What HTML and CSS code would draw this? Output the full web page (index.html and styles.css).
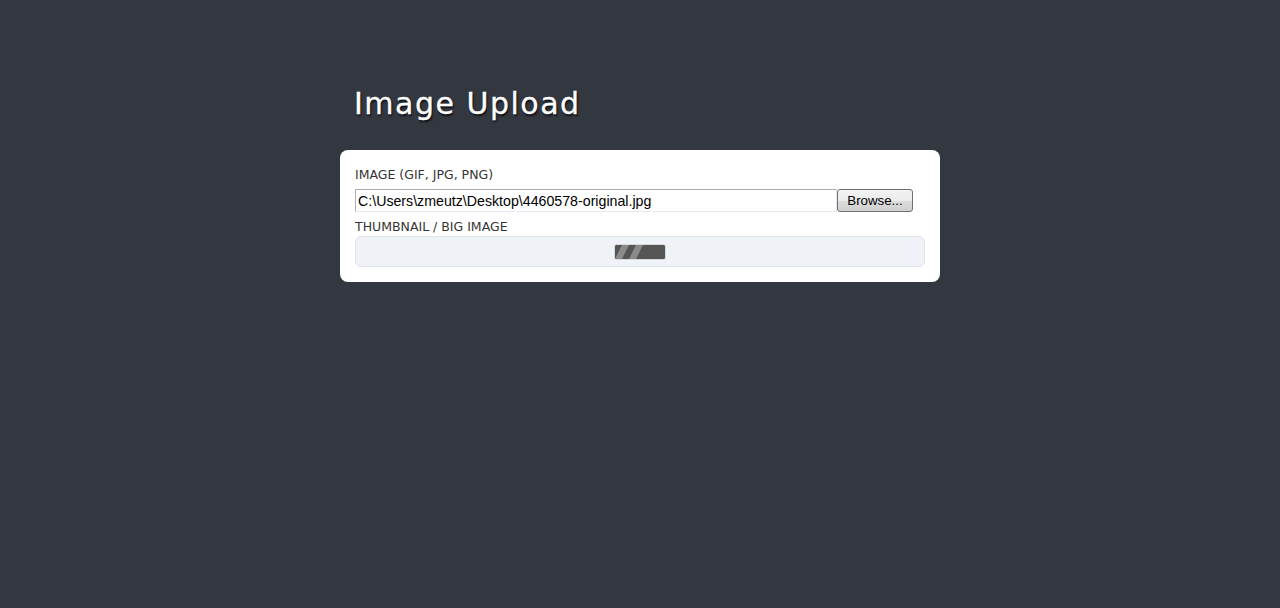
FILE: index.html
```html
<!DOCTYPE html>
<html>
<head>
<meta charset="utf-8">
<title>Image Upload</title>
<link rel="stylesheet" href="styles.css">
</head>
<body>
<div class="page">
  <h1 class="title">Image Upload</h1>
  <div class="card">
    <div class="label">IMAGE (GIF, JPG, PNG)</div>
    <div class="file-row">
      <div class="file-input">C:\Users\zmeutz\Desktop\4460578-original.jpg</div>
      <div class="browse">Browse...</div>
    </div>
    <div class="label label-2">THUMBNAIL / BIG IMAGE</div>
    <div class="thumb">
      <div class="loader">
        <svg width="50" height="14" viewBox="0 0 50 14">
          <rect width="50" height="14" fill="#555555"/>
          <polygon points="7,0 14,0 7,14 0,14" fill="#8a8a8a"/>
          <polygon points="21,0 28,0 21,14 14,14" fill="#8a8a8a"/>
        </svg>
      </div>
    </div>
  </div>
</div>
</body>
</html>
```
FILE: styles.css
```css
html, body {
  margin: 0;
  padding: 0;
  background: #333740;
  height: 100%;
}
.page {
  width: 600px;
  margin: 0 auto;
  padding-top: 84px;
}
.title {
  margin: 0 0 26px 14px;
  font-family: "DejaVu Sans", Verdana, sans-serif;
  font-weight: normal;
  font-size: 30px;
  line-height: 40px;
  letter-spacing: 1.5px;
  color: #ffffff;
  text-shadow: 1px 2px 2px rgba(0,0,0,0.75);
  -webkit-text-stroke: 0.3px #ffffff;
}
.card {
  background: #ffffff;
  border-radius: 8px;
  padding: 15px 15px 15px 15px;
}
.label {
  font-family: "DejaVu Sans", Tahoma, sans-serif;
  font-size: 12.5px;
  line-height: 18px;
  color: #333;
  padding-top: 1px;
}
.label-2 {
  padding-top: 0;
  margin-top: 6px;
  line-height: 17px;
}
.file-row {
  display: flex;
  margin-top: 5px;
  height: 23px;
}
.file-input {
  box-sizing: border-box;
  width: 482px;
  height: 23px;
  border: 1px solid #abadb3;
  border-right-color: #e3e9ef;
  border-bottom-color: #e3e9ef;
  font-family: "Liberation Sans", Arial, sans-serif;
  font-size: 14.2px;
  line-height: 22px;
  padding-left: 2px;
  color: #000;
  white-space: nowrap;
  overflow: hidden;
}
.browse {
  box-sizing: border-box;
  width: 76px;
  height: 23px;
  border: 1px solid #707070;
  border-radius: 3px;
  background: linear-gradient(#f2f2f2 0%, #ebebeb 50%, #dddddd 51%, #cfcfcf 100%);
  font-family: "Liberation Sans", Arial, sans-serif;
  font-size: 13.3px;
  line-height: 22px;
  text-align: center;
  color: #000;
}
.thumb {
  box-sizing: border-box;
  height: 31px;
  margin-top: 1px;
  width: 570px;
  background: #eff2f7;
  border: 1px solid #e1e4e9;
  border-radius: 6px;
  display: flex;
  align-items: center;
  justify-content: center;
}
.loader {
  box-sizing: border-box;
  width: 52px;
  height: 16px;
  border: 1px solid #d8d8d8;
  border-radius: 3px;
  overflow: hidden;
  background: #555555;
  display: flex;
}
.loader svg {
  display: block;
}
```
